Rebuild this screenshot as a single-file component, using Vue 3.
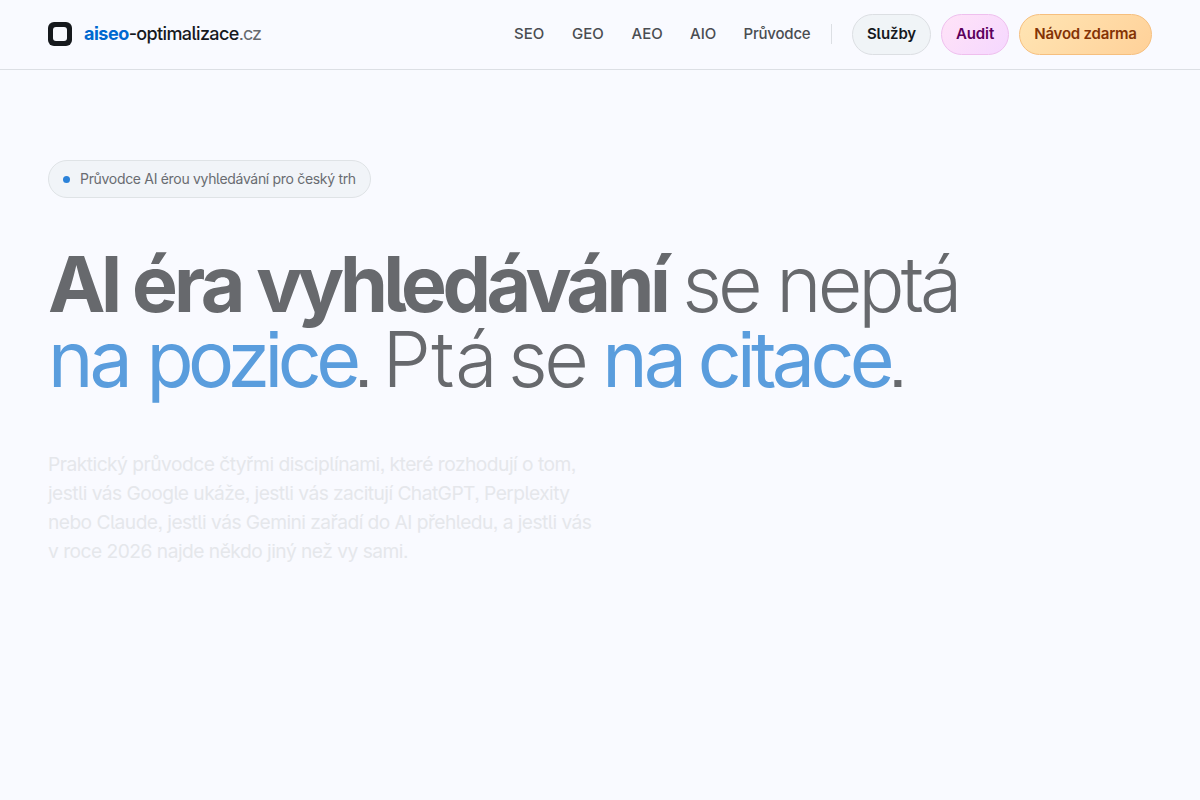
<script setup>
const links = [
  { label: 'SEO', cls: 'seo' },
  { label: 'GEO', cls: 'geo' },
  { label: 'AEO', cls: 'aeo' },
  { label: 'AIO', cls: 'aio' },
  { label: 'Průvodce', cls: 'guide' }
]
const lead = [
  'Praktický průvodce čtyřmi disciplínami, které rozhodují o tom,',
  'jestli vás Google ukáže, jestli vás zacitují ChatGPT, Perplexity',
  'nebo Claude, jestli vás Gemini zařadí do AI přehledu, a jestli vás',
  'v roce 2026 najde někdo jiný než vy sami.'
]
</script>

<template>
  <div class="page">
    <header class="header">
      <a class="brand">
        <svg class="mark" viewBox="0 0 24 24" width="24" height="24">
          <rect width="24" height="24" rx="6" fill="#16191d" />
          <rect x="5" y="5" width="14" height="14" rx="3" fill="#f9faff" />
        </svg>
        <span class="name"><b>aiseo</b><span class="mid">-optimalizace</span><i>.cz</i></span>
      </a>
      <nav class="nav">
        <a v-for="l in links" :key="l.label" class="link" :class="l.cls"><span>{{ l.label }}</span></a>
        <span class="divider"></span>
        <a class="pill services"><span>Služby</span></a>
        <a class="pill audit"><span>Audit</span></a>
        <a class="pill free"><span>Návod zdarma</span></a>
      </nav>
    </header>
    <main class="hero">
      <div class="badge"><span class="dot"></span><span class="badge-text">Průvodce AI érou vyhledávání pro český trh</span></div>
      <h1>
        <span class="row"><strong><span class="ai">AI</span> <span class="era">éra</span> <span class="vy">vyhledávání</span></strong> <span class="thin t1">se neptá</span></span>
        <span class="row"><em>na <span class="pozice">pozice</span></em><span class="stop">.</span> <span class="thin pta">Ptá</span> <span class="thin se">se</span> <em class="e2">na <span class="citace">citace</span></em><span class="stop">.</span></span>
      </h1>
      <p class="lead"><span v-for="(t, i) in lead" :key="i" :class="'line' + i">{{ t }}</span></p>
    </main>
  </div>
</template>

<style>
html, body { background: #f9faff; }
</style>

<style scoped>
.page { height: 800px; overflow: hidden; background: #f9faff; font-family: Inter, "Liberation Sans", sans-serif; font-feature-settings: "cv05", "ss07"; color: #16191d; }
.header { box-sizing: border-box; height: 70px; padding: 0 48px; border-bottom: 1px solid #dcdfe4; display: flex; align-items: center; justify-content: space-between; }
.brand { display: flex; align-items: center; gap: 12px; padding-bottom: 2px; }
.mark { display: block; }
.name { font-size: 18px; line-height: 24px; white-space: nowrap; }
.name b { font-weight: 700; color: #0068d0; letter-spacing: -0.5px; }
.mid { font-weight: 500; letter-spacing: -0.63px; }
.name i { font-style: normal; color: #66696e; letter-spacing: -0.9px; }
.nav { display: flex; align-items: center; }
.link { font-size: 15px; font-weight: 500; line-height: 20px; padding-bottom: 2px; color: #4a4d52; white-space: nowrap; flex: none; }
.seo { width: 58px; }
.geo { width: 59.5px; }
.aeo { width: 58.5px; }
.aio { width: 53.5px; }
.guide { width: 87.5px; letter-spacing: -0.2px; }
.divider { width: 1px; height: 20px; background: #dcdfe4; margin-right: 20px; position: relative; top: -1px; }
.pill { box-sizing: border-box; height: 41px; padding-bottom: 2px; border-radius: 21px; border: 1px solid #dcdfe3; display: flex; align-items: center; justify-content: center; font-size: 15px; font-weight: 630; letter-spacing: -0.1px; white-space: nowrap; }
.services { width: 79px; background: #f0f4f7; }
.audit { width: 68px; margin-left: 10px; border-color: #efbfee; color: #5c005c; background: linear-gradient(135deg, #ffe3f7, #f5d7ff); }
.free { width: 133px; margin-left: 10px; border-color: #f6bf7e; color: #843305; background: linear-gradient(135deg, #ffe5b4, #ffd199); letter-spacing: -0.2px; }
.hero { padding: 90px 48px 0; }
.badge { box-sizing: border-box; width: 323px; height: 38px; border: 1px solid #dfe3e6; border-radius: 19px; background: #f1f4f8; display: flex; align-items: center; padding-left: 14px; gap: 10px; }
.dot { width: 7px; height: 7px; border-radius: 50%; background: #2b82d9; flex: none; }
.badge-text { font-size: 14px; letter-spacing: -0.315px; color: #696c71; white-space: nowrap; padding-bottom: 2px; }
h1 { margin: 49px 0 0; font-size: 77px; line-height: 75px; color: #67696d; font-weight: 200; }
.row { display: flex; white-space: nowrap; }
h1 strong { font-weight: 670; letter-spacing: -3.8px; }
.ai { letter-spacing: -4.8px; }
.era { letter-spacing: -3.7px; }
.vy { letter-spacing: -4.5px; }
.thin { font-weight: 260; letter-spacing: -3.5px; }
.t1 { margin-left: 16px; letter-spacing: -4px; }
.pta { margin-left: 12px; letter-spacing: 0.5px; }
.se { margin-left: 10px; }
em { font-style: normal; font-weight: 420; color: #5a9ddd; letter-spacing: -4px; }
.pozice { letter-spacing: -5.5px; }
.citace { letter-spacing: -4.7px; }
.e2 { margin-left: 17px; word-spacing: -3px; }
.stop { font-weight: 340; letter-spacing: -4px; margin-left: -3px; }
.lead { margin: 53.15px 0 0; font-size: 19.2px; line-height: 28.8px; letter-spacing: -0.51px; color: #e5e7eb; }
.lead span { display: block; width: max-content; white-space: nowrap; }
.lead .line1, .lead .line2 { letter-spacing: -0.55px; }
</style>
